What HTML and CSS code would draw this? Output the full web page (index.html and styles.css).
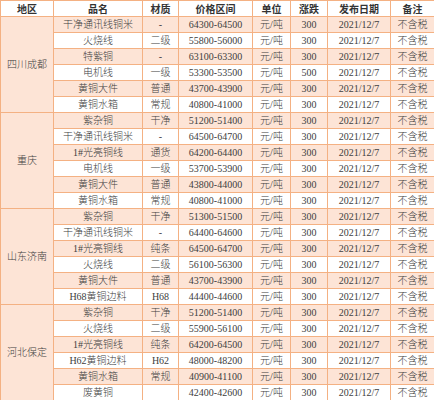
FILE: index.html
```html
<!DOCTYPE html>
<html lang="zh-CN">
<head>
<meta charset="utf-8">
<link rel="stylesheet" href="styles.css">
</head>
<body>
<table class="price-table">
  <colgroup>
    <col class="c1"><col class="c2"><col class="c3"><col class="c4"><col class="c5"><col class="c6"><col class="c7"><col class="c8">
  </colgroup>
  <thead>
    <tr><th>地区</th><th>品名</th><th>材质</th><th>价格区间</th><th>单位</th><th>涨跌</th><th>发布日期</th><th>备注</th></tr>
  </thead>
  <tbody>
    <tr class="odd"><td class="region" rowspan="6">四川成都</td><td>干净通讯线铜米</td><td>-</td><td>64300-64500</td><td>元/吨</td><td>300</td><td>2021/12/7</td><td>不含税</td></tr>
    <tr><td>火烧线</td><td>二级</td><td>55800-56000</td><td>元/吨</td><td>300</td><td>2021/12/7</td><td>不含税</td></tr>
    <tr class="odd"><td>特紫铜</td><td>-</td><td>63100-63300</td><td>元/吨</td><td>300</td><td>2021/12/7</td><td>不含税</td></tr>
    <tr><td>电机线</td><td>一级</td><td>53300-53500</td><td>元/吨</td><td>500</td><td>2021/12/7</td><td>不含税</td></tr>
    <tr class="odd"><td>黄铜大件</td><td>普通</td><td>43700-43900</td><td>元/吨</td><td>300</td><td>2021/12/7</td><td>不含税</td></tr>
    <tr><td>黄铜水箱</td><td>常规</td><td>40800-41000</td><td>元/吨</td><td>300</td><td>2021/12/7</td><td>不含税</td></tr>

    <tr class="odd"><td class="region" rowspan="6">重庆</td><td>紫杂铜</td><td>干净</td><td>51200-51400</td><td>元/吨</td><td>300</td><td>2021/12/7</td><td>不含税</td></tr>
    <tr><td>干净通讯线铜米</td><td>-</td><td>64500-64700</td><td>元/吨</td><td>300</td><td>2021/12/7</td><td>不含税</td></tr>
    <tr class="odd"><td>1#光亮铜线</td><td>通货</td><td>64200-64400</td><td>元/吨</td><td>300</td><td>2021/12/7</td><td>不含税</td></tr>
    <tr><td>电机线</td><td>一级</td><td>53700-53900</td><td>元/吨</td><td>300</td><td>2021/12/7</td><td>不含税</td></tr>
    <tr class="odd"><td>黄铜大件</td><td>普通</td><td>43800-44000</td><td>元/吨</td><td>300</td><td>2021/12/7</td><td>不含税</td></tr>
    <tr><td>黄铜水箱</td><td>常规</td><td>40800-41000</td><td>元/吨</td><td>300</td><td>2021/12/7</td><td>不含税</td></tr>

    <tr class="odd"><td class="region" rowspan="6">山东济南</td><td>紫杂铜</td><td>干净</td><td>51300-51500</td><td>元/吨</td><td>300</td><td>2021/12/7</td><td>不含税</td></tr>
    <tr><td>干净通讯线铜米</td><td>-</td><td>64400-64600</td><td>元/吨</td><td>300</td><td>2021/12/7</td><td>不含税</td></tr>
    <tr class="odd"><td>1#光亮铜线</td><td>纯条</td><td>64500-64700</td><td>元/吨</td><td>300</td><td>2021/12/7</td><td>不含税</td></tr>
    <tr><td>火烧线</td><td>二级</td><td>56100-56300</td><td>元/吨</td><td>300</td><td>2021/12/7</td><td>不含税</td></tr>
    <tr class="odd"><td>黄铜大件</td><td>普通</td><td>43700-43900</td><td>元/吨</td><td>300</td><td>2021/12/7</td><td>不含税</td></tr>
    <tr><td>H68黄铜边料</td><td>H68</td><td>44400-44600</td><td>元/吨</td><td>300</td><td>2021/12/7</td><td>不含税</td></tr>

    <tr class="odd"><td class="region" rowspan="6">河北保定</td><td>紫杂铜</td><td>干净</td><td>51200-51400</td><td>元/吨</td><td>300</td><td>2021/12/7</td><td>不含税</td></tr>
    <tr><td>火烧线</td><td>二级</td><td>55900-56100</td><td>元/吨</td><td>300</td><td>2021/12/7</td><td>不含税</td></tr>
    <tr class="odd"><td>1#光亮铜线</td><td>纯条</td><td>64200-64500</td><td>元/吨</td><td>300</td><td>2021/12/7</td><td>不含税</td></tr>
    <tr><td>H62黄铜边料</td><td>H62</td><td>48000-48200</td><td>元/吨</td><td>300</td><td>2021/12/7</td><td>不含税</td></tr>
    <tr class="odd"><td>黄铜水箱</td><td>常规</td><td>40900-41100</td><td>元/吨</td><td>300</td><td>2021/12/7</td><td>不含税</td></tr>
    <tr><td>废黄铜</td><td></td><td>42400-42600</td><td>元/吨</td><td>300</td><td>2021/12/7</td><td>不含税</td></tr>
  </tbody>
</table>
</body>
</html>
```
FILE: styles.css
```css
html, body {
  margin: 0;
  padding: 0;
  background: #ffffff;
}
.price-table {
  border-collapse: collapse;
  table-layout: fixed;
  width: 434px;
  font-family: "Liberation Serif", "Noto Sans CJK SC", serif;
  font-size: 10px;
  font-weight: 300;
  color: #404040;
}
.c1 { width: 53px; }
.c2 { width: 89px; }
.c3 { width: 36px; }
.c4 { width: 74px; }
.c5 { width: 38px; }
.c6 { width: 37px; }
.c7 { width: 63px; }
.c8 { width: 44px; }
.price-table th,
.price-table td {
  border: 1px solid #f4b183;
  height: 15px;
  padding: 0;
  line-height: 15px;
  text-align: center;
  white-space: nowrap;
  overflow: hidden;
  box-sizing: border-box;
}
.price-table th {
  background: #ffffff;
  font-family: "Noto Sans CJK SC", sans-serif;
  font-weight: bold;
  color: #333333;
  height: 16px;
}
.price-table tr.odd td {
  background: #fde4d6;
}
.price-table td.region {
  background: #fde4d6;
}
```
